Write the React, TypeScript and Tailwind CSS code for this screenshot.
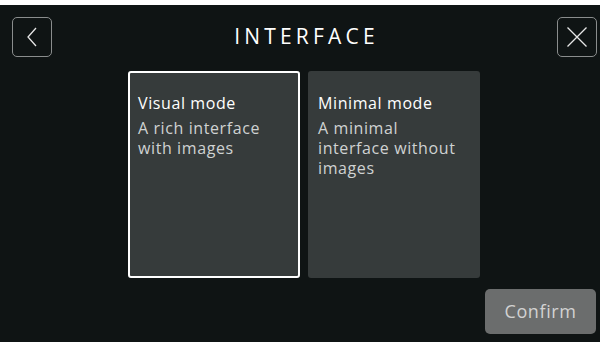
import React from 'react'

const font = { fontFamily: '"Open Sans", "Noto Sans", sans-serif' }

function ModeCard({ title, desc, selected }: { title: string; desc: string; selected?: boolean }) {
  return (
    <div
      className={`w-[172px] h-[207px] rounded-[3px] bg-[#363b3b] pl-[8px] pr-[6px] pt-[20px] ${
        selected ? 'border-2 border-white' : 'border-2 border-transparent'
      }`}
    >
      <div className="text-[16px] leading-[20px] tracking-[0.6px] text-white">{title}</div>
      <div className="mt-[5px] text-[16px] leading-[20px] tracking-[0.6px] text-[#cfd2d2]">{desc}</div>
    </div>
  )
}

export default function App() {
  return (
    <div className="w-[600px] h-[342px] bg-[#0f1414] flex flex-col overflow-hidden" style={font}>
      <div className="h-[5px] bg-white" />

      {/* header */}
      <div className="grid grid-cols-[40px_1fr_40px] items-center pt-[12px] pl-[12px] pr-[3px]">
        <button className="w-[40px] h-[40px] rounded-[5px] border border-[#8a8d8d] flex items-center justify-center">
          <svg width="14" height="22" viewBox="0 0 14 22" fill="none" stroke="#e6e6e6" strokeWidth="1.3">
            <path d="M11 2 L3 11 L11 20" />
          </svg>
        </button>
        <div className="text-center pl-[4px] text-[21px] tracking-[4.2px] text-white font-normal">INTERFACE</div>
        <button className="w-[40px] h-[40px] rounded-[5px] border border-[#8a8d8d] flex items-center justify-center">
          <svg width="22" height="22" viewBox="0 0 22 22" fill="none" stroke="#e6e6e6" strokeWidth="1.3">
            <path d="M1.5 1.5 L20.5 20.5 M20.5 1.5 L1.5 20.5" />
          </svg>
        </button>
      </div>

      {/* mode cards */}
      <div className="flex gap-[8px] ml-[128px] mt-[14px]">
        <ModeCard title="Visual mode" desc="A rich interface with images" selected />
        <ModeCard title="Minimal mode" desc="A minimal interface without images" />
      </div>

      <div className="flex justify-end pr-[4px] mt-[11px]">
        <button className="w-[111px] h-[45px] rounded-[5px] bg-[#6b6d6d] text-[#d2d2d2] text-[18px] tracking-[0.6px]">
          Confirm
        </button>
      </div>
    </div>
  )
}
